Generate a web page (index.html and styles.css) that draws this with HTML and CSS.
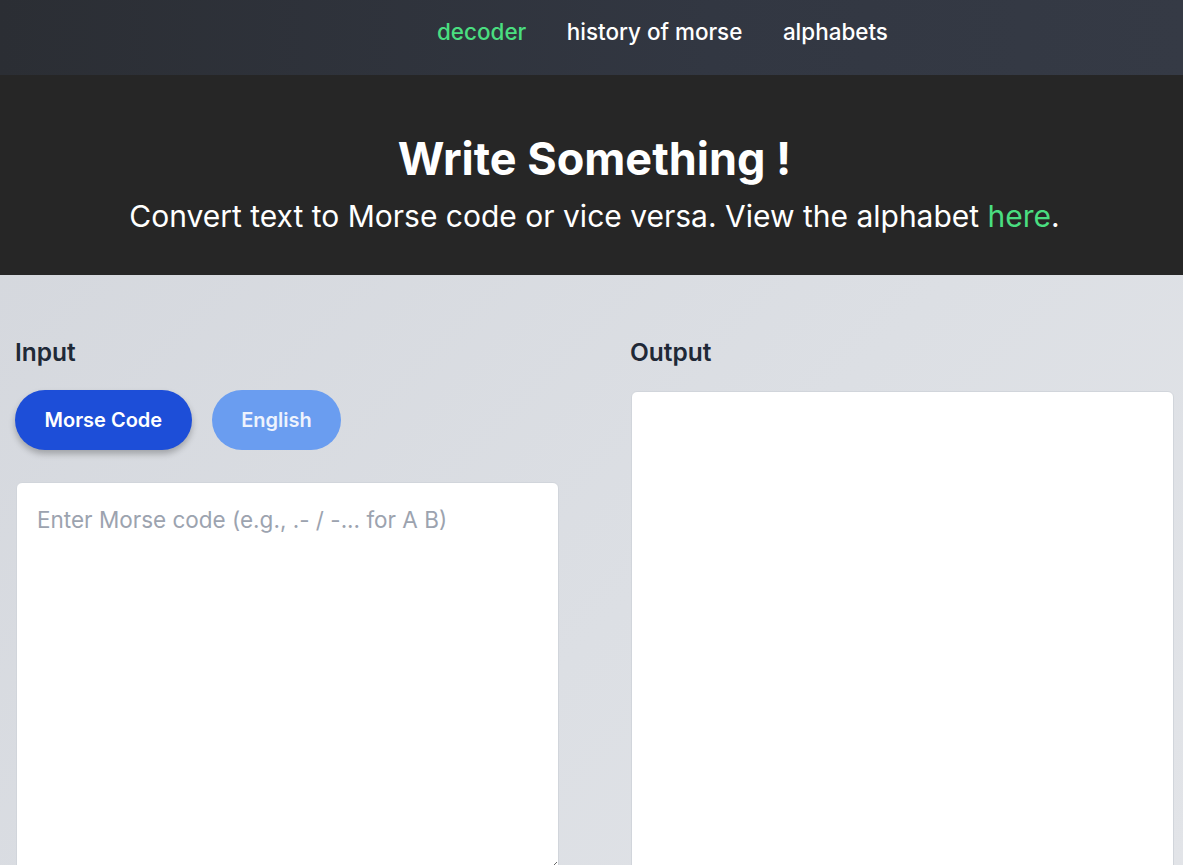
FILE: index.html
```html
<!DOCTYPE html>
<html lang="en">
<head>
<meta charset="utf-8">
<title>Morse Decoder</title>
<link rel="stylesheet" href="styles.css">
</head>
<body>
<header class="topbar">
  <nav class="nav">
    <a class="nav-link active" href="#">decoder</a>
    <a class="nav-link" href="#">history of morse</a>
    <a class="nav-link" href="#">alphabets</a>
  </nav>
</header>
<section class="hero">
  <h1 class="hero-title">Write Something !</h1>
  <p class="hero-sub">Convert text to Morse code or vice versa. View the alphabet <a class="hero-link" href="#">here</a>.</p>
</section>
<main class="main">
  <div class="col">
    <h2 class="label">Input</h2>
    <div class="toggles">
      <button class="btn btn-primary">Morse Code</button>
      <button class="btn btn-light">English</button>
    </div>
    <textarea class="input-box" placeholder="Enter Morse code (e.g., .- / -... for A B)"></textarea>
  </div>
  <div class="col col-right">
    <h2 class="label">Output</h2>
    <div class="output-box"></div>
  </div>
</main>
</body>
</html>
```

FILE: styles.css
```css
* { box-sizing: border-box; }
html, body { margin: 0; padding: 0; }
body {
  font-family: Inter, "Noto Sans", sans-serif;
  background: linear-gradient(135deg, #d3d6dc 0%, #dcdfe4 60%, #e2e4e8 100%);
  height: 865px;
  overflow: hidden;
}
.topbar {
  height: 75px;
  background: linear-gradient(90deg, #2b2e34 0%, #323742 60%, #353a45 100%);
  display: flex;
  align-items: center;
}
.nav {
  display: flex;
  gap: 40.5px;
  margin-left: 437px;
  margin-top: -13px;
}
.nav-link {
  color: #ffffff;
  text-decoration: none;
  font-size: 22.45px;
  font-weight: 500;
}
.nav-link.active { color: #4ade80; }
.hero {
  height: 200px;
  background: #262626;
  text-align: center;
  color: #fff;
  padding: 55px 0 0 6px;
}
.hero-title {
  margin: 0;
  font-size: 45px;
  font-weight: 700;
  line-height: 58px;
}
.hero-sub {
  margin: 0;
  margin-top: 6px;
  font-size: 30px;
  line-height: 44px;
  font-weight: 400;
}
.hero-link { color: #4ade80; text-decoration: none; }
.main {
  display: flex;
  gap: 72px;
  padding: 60px 10px 0 15px;
}
.col { flex: 1; display: flex; flex-direction: column; }
.col-right { margin-left: -1px; }
.label {
  margin: 0;
  font-size: 24.5px;
  font-weight: 600;
  color: #1f2937;
  line-height: 35px;
}
.toggles {
  display: flex;
  gap: 20px;
  margin-top: 20px;
  margin-bottom: 32px;
}
.btn {
  border: none;
  border-radius: 999px;
  height: 60px;
  font-family: inherit;
  font-size: 20px;
  font-weight: 600;
  padding: 0 29.5px;
  color: #fff;
}
.btn-primary {
  background: #1d4ed8;
  box-shadow: 0 4px 6px rgba(0,0,0,0.25);
}
.btn-light {
  background: #6a9df0;
  color: #eef3fd;
}
.input-box {
  width: 543px;
  height: 389px;
  margin-left: 1px;
  border: 1px solid #d1d5db;
  border-radius: 6px;
  background: #fff;
  padding: 23px 20px;
  font-family: inherit;
  font-size: 22.5px;
  color: #111827;
}
.input-box::placeholder { color: #9ca3af; }
.output-box {
  margin-left: 1px;
  width: 543px;
  height: 480px;
  border: 1px solid #d1d5db;
  border-radius: 6px;
  background: #fff;
  margin-top: 21px;
}
```
